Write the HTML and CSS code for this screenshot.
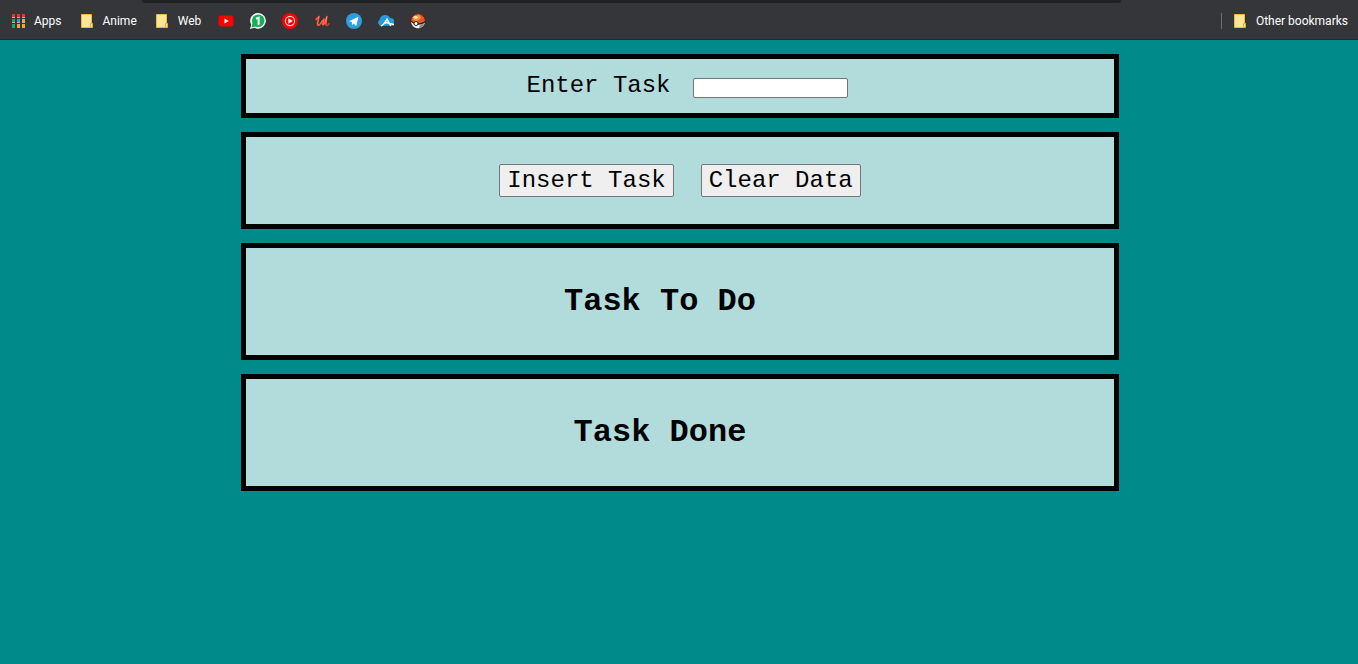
FILE: index.html
```html
<!DOCTYPE html>
<html lang="en">
<head>
<meta charset="utf-8">
<title>Task List</title>
<link rel="stylesheet" href="styles.css">
</head>
<body>
<nav class="bookmarks" aria-label="Bookmarks">
  <div class="tab-strip"></div>
  <div class="bookmarks-row">
    <a class="bookmark named" href="#"><svg class="icon" viewBox="0 0 16 16" shape-rendering="crispEdges"><path fill="#e8352e" d="M2 1h3v3H2zM7 1h3v3H7zM12 1h3v3h-3z"/><path fill="#bcb8ae" d="M2 4h3v1H2zM7 4h3v1H7zM12 4h3v1h-3zM2 9h3v1H2zM7 9h3v1H7zM12 9h3v1h-3z"/><path fill="#16a765" d="M2 6h3v3H2zM2 11h3v4H2z"/><path fill="#2b9be0" d="M7 6h3v3H7z"/><path fill="#f0a72d" d="M12 6h3v3h-3zM7 11h3v4H7zM12 11h3v4h-3z"/></svg>Apps</a>
    <a class="bookmark named" href="#"><svg class="icon" viewBox="0 0 16 16"><path fill="#ffe596" stroke="#edbb45" d="M2.500 1.500h10v13h-10z"/><path fill="#ffe596" stroke="#e5b03a" d="M11.500 10.500h2v4h-2z"/></svg>Anime</a>
    <a class="bookmark named" href="#"><svg class="icon" viewBox="0 0 16 16"><path fill="#ffe596" stroke="#edbb45" d="M2.500 1.500h10v13h-10z"/><path fill="#ffe596" stroke="#e5b03a" d="M11.500 10.500h2v4h-2z"/></svg>Web</a>
    <a class="bookmark" href="#" aria-label="Videos"><svg class="icon" viewBox="0 0 16 16"><rect x=".5" y="2.500" width="15" height="11" rx="3" fill="#f00"/><path fill="#fff" d="M6.500 5.500v5l4.200-2.500z"/></svg></a>
    <a class="bookmark" href="#" aria-label="Messages"><svg class="icon" viewBox="0 0 16 16"><path fill="#fff" d="M8.200 0a7.800 7.800 0 1 1-3.800 14.700L0 16l1.300-4.200A7.800 7.800 0 0 1 8.200 0z"/><circle cx="8.200" cy="7.800" r="6.300" fill="#13b154"/><path fill="#13b154" d="M2.500 10l-1 4.500 4.500-1z"/><path fill="none" stroke="#fff" stroke-width="2" d="M6 5.600l2.600-1V12"/></svg></a>
    <a class="bookmark" href="#" aria-label="Music"><svg class="icon" viewBox="0 0 16 16"><circle cx="8" cy="8" r="8" fill="#f00"/><circle cx="8" cy="8" r="4.600" fill="none" stroke="#ffd9d0" stroke-width="1.100"/><path fill="#fff" d="M6.400 5.300v5.400l4.400-2.700z"/></svg></a>
    <a class="bookmark" href="#" aria-label="Courses"><svg class="icon" viewBox="0 0 16 16"><g fill="none" stroke-linecap="round" stroke-linejoin="round"><path stroke="#e0352c" stroke-width="1.800" d="M2 6.500L5 3.500 3.500 10.500C3.300 13 5.500 13.500 8.500 7.500M10 6L8.800 10.500C8.500 13 10.500 12 12.800 3.500L11.800 11C12 13 13.500 12.800 14.800 11"/><path stroke="#ffae78" stroke-width=".6" d="M2 6.500L5 3.500 3.500 10.500C3.300 13 5.500 13.500 8.500 7.500M10 6L8.800 10.500C8.500 13 10.500 12 12.800 3.500L11.800 11"/></g></svg></a>
    <a class="bookmark" href="#" aria-label="Chat"><svg class="icon" viewBox="0 0 16 16"><circle cx="8" cy="8" r="8" fill="#2ca0df"/><path fill="#fff" d="M3 8.200l9.500-4.500-2.300 9.500-2.500-2.600-1.700 1.600-.2-3.200z"/></svg></a>
    <a class="bookmark" href="#" aria-label="Cloud"><svg class="icon" viewBox="0 0 16 16"><path fill="#2799df" d="M3.500 13A3.400 3.400 0 0 1 1.700 6.700 5.700 5.700 0 0 1 12.300 5a4.200 4.200 0 0 1 2.800 7.500z"/><path fill="none" stroke="#fff" stroke-width="1.500" d="M2.800 13C5.800 12.300 7.600 8.500 9 6.300l3.800 6.500M7 10c3-1 5.500.8 9 1.700"/></svg></a>
    <a class="bookmark" href="#" aria-label="Games"><svg class="icon" viewBox="0 0 16 16"><circle cx="8" cy="8" r="7.400" fill="#e9532b" stroke="#4b241d"/><path fill="#f69b35" d="M4 3.500L9 1.500 11 5 7 8 3 7z"/><ellipse cx="5.500" cy="4.300" rx="2.200" ry="1.600" fill="#ffe0ad"/><path fill="#eee" d="M1 8.500c3 3.200 9 3.800 14 .8-.8 3.500-3.500 6-7 6S1.500 12.500 1 8.500z"/><path fill="none" stroke="#252525" stroke-width="1.300" d="M.9 8.100c3.500 3.400 9.500 4 14.200.8"/><circle cx="6" cy="10.500" r="2" fill="#fff" stroke="#252525"/><path fill="#77847b" d="M9.500 12.800l4.700-2.500c-.8 2.300-2.500 4.200-5 4.700z"/></svg></a>
    <a class="bookmark other" href="#"><svg class="icon" viewBox="0 0 16 16"><path fill="#ffe596" stroke="#edbb45" d="M2.500 1.500h10v13h-10z"/><path fill="#ffe596" stroke="#e5b03a" d="M11.500 10.500h2v4h-2z"/></svg>Other bookmarks</a>
  </div>
</nav>
<main class="tasks">
  <form class="panel entry">
    <label for="task">Enter Task</label>
    <input class="task-input" id="task" type="text">
  </form>
  <section class="panel actions">
    <button class="action" type="button">Insert Task</button>
    <button class="action" type="button">Clear Data</button>
  </section>
  <section class="panel list"><h1 class="title">Task To Do</h1></section>
  <section class="panel list"><h1 class="title">Task Done</h1></section>
</main>
</body>
</html>
```
FILE: styles.css
```css
* { box-sizing: border-box; }
body {
  margin: 0;
  background: #008b8b;
  color: #000;
  font-family: "Courier New", "Liberation Mono", monospace;
}
.bookmarks {
  height: 40px;
  background: #35363a;
  border-bottom: 1px solid #28292c;
  font: 12px/16px Roboto, sans-serif;
}
.tab-strip {
  height: 3px;
  margin: 0 237px 0 142px;
  background: #202124;
  border-radius: 0 0 8px 8px;
}
.bookmarks-row {
  display: flex;
  align-items: center;
  gap: 16px;
  height: 36px;
  padding: 0 10px;
}
.bookmark {
  display: flex;
  align-items: center;
  gap: 8px;
  color: #fff;
  text-decoration: none;
  white-space: nowrap;
}
.named { padding-right: 1px; }
.icon { width: 16px; height: 16px; flex: none; }
.other {
  margin-left: auto;
  padding-left: 10px;
  border-left: 1px solid #6b6c6f;
}
.tasks {
  display: flex;
  flex-direction: column;
  gap: 14px;
  padding: 14px 239px 14px 241px;
}
.panel {
  display: flex;
  justify-content: center;
  align-items: center;
  border: 5px solid #000;
  background: #b2dcdc;
  font-size: 24px;
  line-height: 27px;
}
.entry { gap: 22px; padding: 13px 0 14px 14px; }
.task-input {
  width: 155px;
  height: 20px;
  margin-top: 4px;
  padding: 1px 2px;
  border: 1px solid #767676;
  border-radius: 2px;
  background: #fff;
  font: 13px "Liberation Sans", sans-serif;
}
.actions { gap: 27px; padding: 27px 0; }
.action {
  padding: 2px 7px;
  border: 1px solid #767676;
  border-radius: 2px;
  background: #efefef;
  color: #000;
  font: inherit;
}
.list { padding: 36px 40px 35px 0; }
.title { margin: 0; font-size: 32px; line-height: 36px; }
```
